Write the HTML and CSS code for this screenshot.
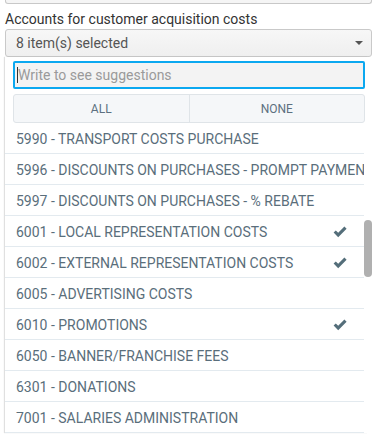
FILE: index.html
```html
<!DOCTYPE html>
<html>
<head>
<meta charset="utf-8">
<link rel="stylesheet" href="styles.css">
</head>
<body>
<div class="prev-field"></div>
<div class="field">
  <label class="label">Accounts for customer acquisition costs</label>
  <div class="select">
    <span>8 item(s) selected</span>
    <span class="caret"></span>
  </div>
  <div class="panel">
    <div class="search"><span class="cursor"></span><span class="ph">Write to see suggestions</span></div>
    <div class="buttons"><div class="btn">ALL</div><div class="btn">NONE</div></div>
    <ul class="list">
      <li><span class="txt">5990 - TRANSPORT COSTS PURCHASE</span></li>
      <li><span class="txt">5996 - DISCOUNTS ON PURCHASES - PROMPT PAYMENT</span></li>
      <li><span class="txt">5997 - DISCOUNTS ON PURCHASES - % REBATE</span></li>
      <li><span class="txt">6001 - LOCAL REPRESENTATION COSTS</span><svg class="check" viewBox="0 0 14 12"><path d="M0.6 6.6 L2.8 4.4 L5.2 6.8 L11.4 0.6 L13.6 2.8 L5.2 11.2 Z" fill="#546e7a"/></svg></li>
      <li><span class="txt">6002 - EXTERNAL REPRESENTATION COSTS</span><svg class="check" viewBox="0 0 14 12"><path d="M0.6 6.6 L2.8 4.4 L5.2 6.8 L11.4 0.6 L13.6 2.8 L5.2 11.2 Z" fill="#546e7a"/></svg></li>
      <li><span class="txt">6005 - ADVERTISING COSTS</span></li>
      <li><span class="txt">6010 - PROMOTIONS</span><svg class="check" viewBox="0 0 14 12"><path d="M0.6 6.6 L2.8 4.4 L5.2 6.8 L11.4 0.6 L13.6 2.8 L5.2 11.2 Z" fill="#546e7a"/></svg></li>
      <li><span class="txt">6050 - BANNER/FRANCHISE FEES</span></li>
      <li><span class="txt">6301 - DONATIONS</span></li>
      <li><span class="txt">7001 - SALARIES ADMINISTRATION</span></li>
    </ul>
    <div class="scrollbar"></div>
  </div>
</div>
</body>
</html>
```

FILE: styles.css
```css
html, body {
  margin: 0;
  padding: 0;
  background: #fff;
  font-family: Roboto, "Liberation Sans", sans-serif;
  overflow: hidden;
  height: 436px;
}
.prev-field {
  margin-left: 5px;
  margin-right: 1px;
  height: 3px;
  border: 1px solid #c8c8c8;
  border-top: none;
  border-radius: 0 0 3px 3px;
  background: #f5f5f5;
}
.field {
  position: relative;
  padding-left: 5px;
}
.label {
  display: block;
  font-size: 14px;
  color: #333;
  line-height: 17px;
  margin-top: 7px;
  margin-bottom: 1px;
}
.select {
  height: 26px;
  margin-right: 1px;
  border: 1px solid #c9c9c9;
  border-radius: 3px;
  background: linear-gradient(#f7f7f7, #efefef);
  display: flex;
  align-items: center;
  justify-content: space-between;
  padding: 0 8px 0 10px;
  font-size: 14px;
  color: #555;
}
.caret {
  width: 0;
  height: 0;
  border-left: 4px solid transparent;
  border-right: 4px solid transparent;
  border-top: 4px solid #555;
}
.panel {
  position: relative;
  margin-right: 5px;
  background: #fff;
  box-shadow: -1px 0 1px rgba(0,0,0,0.12);
  padding-top: 4px;
}
.search {
  margin: 0 3px 0 8px;
  height: 24px;
  border: 2px solid #0ba8f0;
  border-radius: 2px;
  background: #f3f3f3;
  display: flex;
  align-items: center;
  padding-left: 2px;
  font-size: 14px;
  color: #9a9a9a;
}
.cursor {
  width: 1px;
  height: 16px;
  background: #333;
}
.buttons {
  margin: 5px 3px 0 8px;
  height: 27px;
  border: 1px solid #dfe4e8;
  border-radius: 3px;
  background: #f5f7f9;
  display: flex;
}
.btn {
  flex: 1;
  display: flex;
  align-items: center;
  justify-content: center;
  font-size: 12px;
  color: #5c7080;
}
.btn + .btn {
  border-left: 1px solid #dfe4e8;
}
.list {
  list-style: none;
  margin: 0;
  padding: 0;
  margin-right: 4px;
}
.list li {
  position: relative;
  height: 30px;
  border-bottom: 1px solid #e3eaef;
  display: flex;
  align-items: center;
  padding: 1px 0 0 11px;
  box-sizing: content-box;
  font-size: 14px;
  color: #5a6e7b;
  white-space: nowrap;
  overflow: hidden;
}
.list li:first-child {
  height: 29px;
  padding-top: 1px;
}
.list li + li {
  height: 29px;
  padding-top: 1px;
}
.check {
  position: absolute;
  right: 17px;
  top: 10px;
  width: 14px;
  height: 12px;
}
.scrollbar {
  position: absolute;
  right: -4px;
  top: 163px;
  width: 8px;
  height: 57px;
  border-radius: 4px;
  background: #b0b0b0;
}
```
